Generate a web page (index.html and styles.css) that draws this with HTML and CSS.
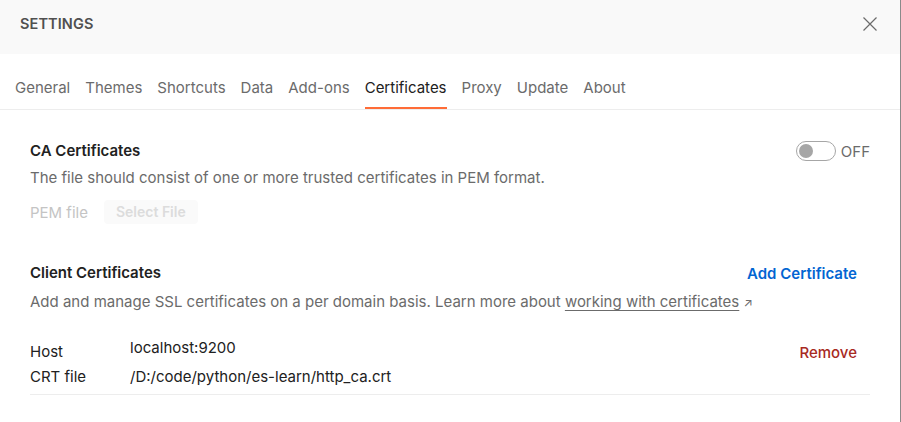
FILE: index.html
```html
<!DOCTYPE html>
<html>
<head>
<meta charset="utf-8">
<link rel="stylesheet" href="styles.css">
</head>
<body>
<div class="modal">
  <div class="header">
    <span class="title">SETTINGS</span>
    <svg class="close" width="16" height="16" viewBox="0 0 16 16"><path d="M1.5 1.5L14.5 14.5M14.5 1.5L1.5 14.5" stroke="#6b6b6b" stroke-width="1.2" fill="none"/></svg>
  </div>
  <div class="tabs">
    <span class="tab">General</span>
    <span class="tab">Themes</span>
    <span class="tab">Shortcuts</span>
    <span class="tab">Data</span>
    <span class="tab">Add-ons</span>
    <span class="tab active">Certificates</span>
    <span class="tab">Proxy</span>
    <span class="tab">Update</span>
    <span class="tab">About</span>
  </div>
  <div class="content">
    <div class="section ca">
      <div class="row-head">
        <span class="sec-title">CA Certificates</span>
        <span class="toggle-wrap"><span class="toggle"><span class="knob"></span></span><span class="off">OFF</span></span>
      </div>
      <div class="desc">The file should consist of one or more trusted certificates in PEM format.</div>
      <div class="pem">
        <span class="pem-label">PEM file</span>
        <span class="select-btn">Select File</span>
      </div>
    </div>
    <div class="section client">
      <div class="row-head">
        <span class="sec-title">Client Certificates</span>
        <span class="add">Add Certificate</span>
      </div>
      <div class="desc desc2">Add and manage SSL certificates on a per domain basis. Learn more about <span class="link">working with certificates</span> <span class="arrow">↗</span></div>
      <div class="cert">
        <div class="cert-grid">
          <span class="k">Host</span><span class="v host-v">localhost:9200</span>
          <span class="k">CRT file</span><span class="v">/D:/code/python/es-learn/http_ca.crt</span>
        </div>
        <span class="remove">Remove</span>
      </div>
    </div>
  </div>
</div>
</body>
</html>
```
FILE: styles.css
```css
html, body { margin: 0; padding: 0; background: #fff; }
body { font-family: Inter, "Noto Sans", sans-serif; font-size: 15px; color: #212121; }
.modal { width: 900px; height: 422px; border-right: 1px solid #8a8a8a; overflow: hidden; }
.header { height: 54px; background: #f9f9f9; display: flex; align-items: center; justify-content: space-between; padding: 0 22px 0 20px; }
.title { font-weight: 600; font-size: 14.5px; color: #505050; letter-spacing: 0.1px; margin-top: -7px; }
.close { margin-top: -7px; }
.tabs { display: flex; gap: 15px; padding: 0 15px; border-bottom: 1px solid #ededed; height: 56px; box-sizing: border-box; align-items: flex-end; }
.tab { color: #6b6b6b; font-size: 15px; padding-bottom: 9px; border-bottom: 2px solid transparent; line-height: 20px; }
.tab.active { color: #212121; border-bottom-color: #ff6c37; }
.content { padding: 0 30px; }
.row-head { display: flex; justify-content: space-between; align-items: center; }
.sec-title { font-weight: 600; font-size: 15px; line-height: 20px; }
.ca { padding-top: 31px; }
.desc { color: #6b6b6b; line-height: 20px; margin-top: 7px; font-size: 15px; }
.desc2 { margin-top: 9px; }
.toggle-wrap { display: flex; align-items: center; gap: 5px; color: #6b6b6b; }
.toggle { width: 36px; height: 18px; border: 1px solid #a6a6a6; border-radius: 10px; display: flex; align-items: center; padding-left: 2px; }
.knob { width: 14px; height: 14px; border-radius: 50%; background: #a6a6a6; }
.off { font-size: 15px; }
.pem { display: flex; align-items: center; gap: 16px; margin-top: 12px; }
.pem-label { color: #c4c4c4; font-size: 15px; }
.select-btn { background: #fafafa; color: #dcdcdc; font-weight: 600; font-size: 14px; border-radius: 4px; padding: 4px 12px; line-height: 16px; }
.client { padding-top: 39px; }
.add { color: #0265d2; font-weight: 600; font-size: 15px; margin-right: 13px; }
.link { text-decoration: underline; text-underline-offset: 3px; }
.arrow { font-size: 12px; }
.cert { display: flex; justify-content: space-between; align-items: flex-start; margin-top: 29px; padding-bottom: 7px; border-bottom: 1px solid #ededed; }
.cert-grid { display: grid; grid-template-columns: 100px auto; row-gap: 5px; line-height: 20px; font-size: 15px; color: #212121; }
.host-v { margin-top: -4px; }
.remove { color: #a82a1f; font-weight: 500; font-size: 15px; margin-right: 13px; margin-top: 1px; }
```
